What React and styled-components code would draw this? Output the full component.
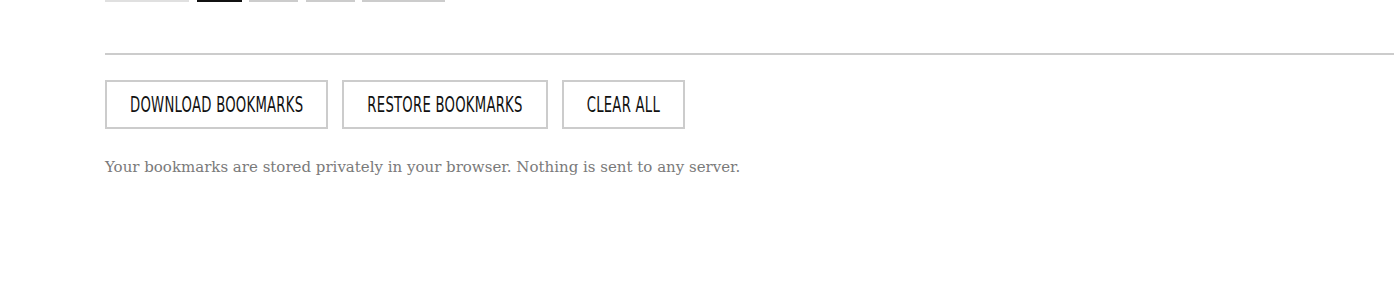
import React from 'react';
import styled, { createGlobalStyle } from 'styled-components';

const GlobalStyle = createGlobalStyle`
  html, body {
    margin: 0;
    padding: 0;
    background: #fff;
  }
`;

const Page = styled.div`
  padding-left: 105px;
  overflow: hidden;
  height: 299px;
`;

// Row of filter chips, mostly scrolled out of view above
const ChipRow = styled.div`
  display: flex;
  gap: 7.5px;
  margin-top: -38px;
`;

const Chip = styled.div`
  box-sizing: border-box;
  height: 40px;
  width: ${props => props.width}px;
  border: 2px solid ${props => props.color || '#ccc'};
`;

const Divider = styled.hr`
  margin: 51px 0 0 0;
  border: none;
  border-top: 2px solid #ccc;
`;

const Actions = styled.div`
  display: flex;
  gap: 14px;
  margin-top: 25px;
`;

const Button = styled.button`
  box-sizing: border-box;
  height: 49px;
  padding: 0 23px;
  background: #fff;
  border: 2px solid #ccc;
  font-family: "DejaVu Sans Condensed", "Liberation Sans Narrow", sans-serif;
  font-size: 14.7px;
  letter-spacing: 0.25px;
  color: #111;
  text-transform: uppercase;
  cursor: pointer;
`;

// tall, narrow lettering
const Label = styled.span`
  display: inline-block;
  transform: scaleY(1.4);
`;

const Note = styled.p`
  margin: 28px 0 0 0;
  font-family: "DejaVu Serif", serif;
  font-size: 15px;
  line-height: 20px;
  color: #7a7a7a;
`;

const chips = [
  { width: 84, color: '#e0e0e0' },
  { width: 45, color: '#111' },
  { width: 49 },
  { width: 49 },
  { width: 83 },
];

const App = () => {
  return (
    <Page>
      <GlobalStyle />
      <ChipRow>
        {chips.map((chip, i) => (
          <Chip key={i} width={chip.width} color={chip.color} />
        ))}
      </ChipRow>
      <Divider />
      <Actions>
        <Button><Label>Download Bookmarks</Label></Button>
        <Button><Label>Restore Bookmarks</Label></Button>
        <Button><Label>Clear All</Label></Button>
      </Actions>
      <Note>Your bookmarks are stored privately in your browser. Nothing is sent to any server.</Note>
    </Page>
  );
};

export default App;
